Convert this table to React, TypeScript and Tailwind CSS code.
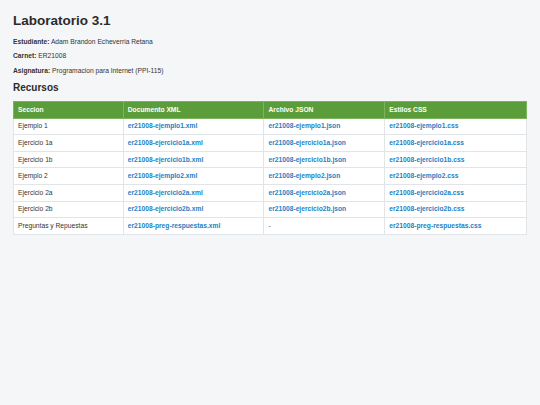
const rows = [
  { seccion: 'Ejemplo 1', xml: 'er21008-ejemplo1.xml', json: 'er21008-ejemplo1.json', css: 'er21008-ejemplo1.css' },
  { seccion: 'Ejercicio 1a', xml: 'er21008-ejercicio1a.xml', json: 'er21008-ejercicio1a.json', css: 'er21008-ejercicio1a.css' },
  { seccion: 'Ejercicio 1b', xml: 'er21008-ejercicio1b.xml', json: 'er21008-ejercicio1b.json', css: 'er21008-ejercicio1b.css' },
  { seccion: 'Ejemplo 2', xml: 'er21008-ejemplo2.xml', json: 'er21008-ejemplo2.json', css: 'er21008-ejemplo2.css' },
  { seccion: 'Ejercicio 2a', xml: 'er21008-ejercicio2a.xml', json: 'er21008-ejercicio2a.json', css: 'er21008-ejercicio2a.css' },
  { seccion: 'Ejercicio 2b', xml: 'er21008-ejercicio2b.xml', json: 'er21008-ejercicio2b.json', css: 'er21008-ejercicio2b.css' },
  { seccion: 'Preguntas y Repuestas', xml: 'er21008-preg-respuestas.xml', json: '', css: 'er21008-preg-respuestas.css' },
];

function Cell({ text }: { text: string }) {
  if (!text) return <td className="border border-[#e2e5e8] px-[4px] text-[#555]">-</td>;
  return (
    <td className="border border-[#e2e5e8] px-[4px]">
      <a href="#" className="font-bold text-[#1e7fc2]">{text}</a>
    </td>
  );
}

export default function App() {
  return (
    <div className="min-h-[405px] w-[540px] bg-[#f4f6f8] px-[13px] pt-[12px] font-['Liberation_Sans',Arial,sans-serif] text-[#333]">
      {/* Header */}
      <h1 className="text-[13.5px] font-bold leading-[18px] text-[#2b2b2b]">Laboratorio 3.1</h1>
      <div className="mt-[8px] flex flex-col gap-[6.6px] text-[6.7px] leading-[7.8px]">
        <p><span className="font-bold">Estudiante:</span> Adam Brandon Echeverria Retana</p>
        <p><span className="font-bold">Carnet:</span> ER21008</p>
        <p><span className="font-bold">Asignatura:</span> Programacion para Internet (PPI-115)</p>
      </div>

      {/* Recursos */}
      <h2 className="mt-[6px] text-[10px] font-bold leading-[13px] text-[#2b2b2b]">Recursos</h2>
      <table className="mt-[7px] w-[514px] border-collapse bg-white text-left text-[6.7px] leading-[8px]">
        <colgroup>
          <col className="w-[110px]" />
          <col className="w-[141px]" />
          <col className="w-[121px]" />
          <col className="w-[142px]" />
        </colgroup>
        <thead>
          <tr className="h-[17px] bg-[#5c9d3b] text-white">
            <th className="border border-[#7db25f] px-[4px] font-bold">Seccion</th>
            <th className="border border-[#7db25f] px-[4px] font-bold">Documento XML</th>
            <th className="border border-[#7db25f] px-[4px] font-bold">Archivo JSON</th>
            <th className="border border-[#7db25f] px-[4px] font-bold">Estilos CSS</th>
          </tr>
        </thead>
        <tbody>
          {rows.map((r) => (
            <tr key={r.seccion} className="h-[16.6px]">
              <td className="border border-[#e2e5e8] px-[4px] text-[#333]">{r.seccion}</td>
              <Cell text={r.xml} />
              <Cell text={r.json} />
              <Cell text={r.css} />
            </tr>
          ))}
        </tbody>
      </table>
    </div>
  );
}
